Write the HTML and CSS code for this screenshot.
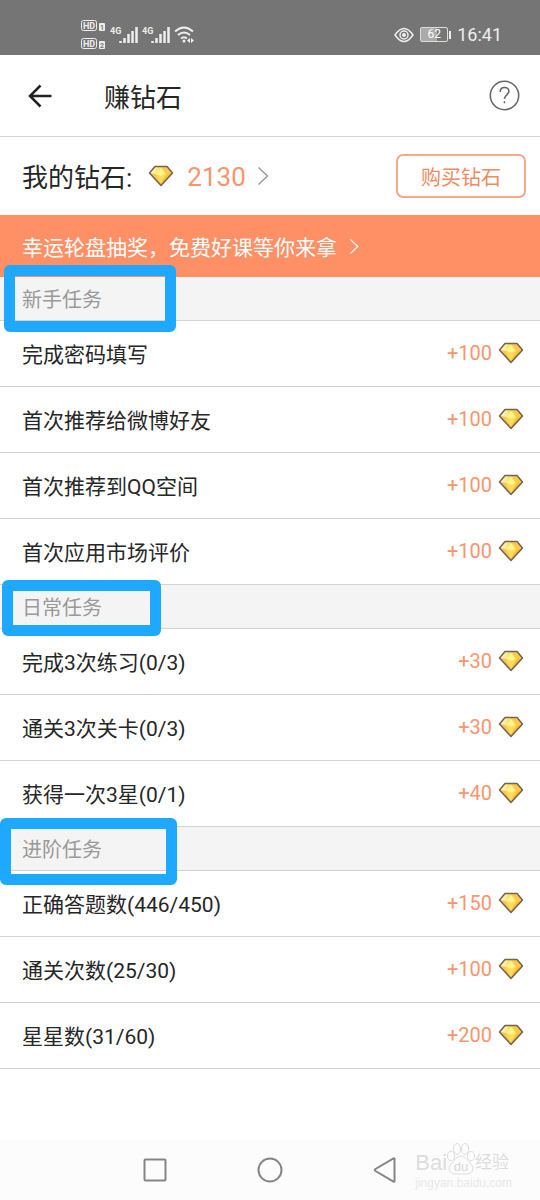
FILE: index.html
```html
<!DOCTYPE html>
<html lang="zh-CN">
<head>
<meta charset="utf-8">
<meta name="viewport" content="width=device-width, initial-scale=1">
<title>赚钻石</title>
<link rel="stylesheet" href="styles.css">
</head>
<body>
<svg class="defs" width="0" height="0" aria-hidden="true">
  <defs>
    <linearGradient id="gold" x1="0" y1="0" x2="1" y2="1">
      <stop offset="0" stop-color="#ffe978"/>
      <stop offset=".5" stop-color="#ffd33f"/>
      <stop offset="1" stop-color="#e8912a"/>
    </linearGradient>
    <linearGradient id="shine" x1="0" y1="0" x2="1" y2="0">
      <stop offset="0" stop-color="#fff8d8"/>
      <stop offset="1" stop-color="#ffdf6a"/>
    </linearGradient>
    <symbol id="gem" viewBox="0 0 26 22">
      <path d="M7 1.500h12L24.500 8 13 20.500 1.500 8z" fill="url(#gold)"/>
      <path d="M7 2 2.500 8 8 9l4-7z" fill="url(#shine)"/>
      <path d="M13 3 8 9l5 2 5-2z" fill="#fff58a"/>
      <path d="M19 2 23.500 8 18 9 14 2z" fill="#fcc94d"/>
      <path d="M2.500 8.500 8 9l5 10z" fill="#fbc457"/>
      <path d="M8 9l5 2 5-2-5 10z" fill="#ffdc5c"/>
      <path d="M7 1.500h12L24.500 8 13 20.500 1.500 8z" fill="none" stroke="#6f6450" stroke-width="1.500" stroke-linejoin="round"/>
    </symbol>
    <symbol id="chevron" viewBox="0 0 12 20">
      <path d="M1.500 1.500 10.500 10l-9 8.500" fill="none" stroke="currentColor" stroke-width="1.500"/>
    </symbol>
    <symbol id="signal" viewBox="0 0 28 18">
      <text x="0" y="8" font-family="Roboto, sans-serif" font-size="9" font-weight="700" fill="currentColor">4G</text>
      <path d="M10.500 17v-2M14.500 17v-5M18.500 17V8M22.500 17V5M26.500 17V1" stroke="currentColor" stroke-width="2.500" fill="none"/>
    </symbol>
  </defs>
</svg>

<div class="screen">
  <div class="status">
    <div class="status-group">
      <svg class="hd" viewBox="0 0 26 32" role="img" aria-label="HD 1, HD 2">
        <g fill="none" stroke="#eee" stroke-width="1">
          <rect x="1.500" y="1.500" width="15" height="10" rx="2"/>
          <rect x="1.500" y="19.500" width="15" height="10" rx="2"/>
        </g>
        <g fill="#eee">
          <rect x="19" y="4" width="6" height="8" rx="1"/>
          <rect x="19" y="22" width="6" height="8" rx="1"/>
        </g>
        <g font-family="Roboto, sans-serif" font-size="9" font-weight="700" fill="#eee">
          <text x="3" y="10">HD</text><text x="3" y="28">HD</text>
        </g>
        <g font-family="Roboto, sans-serif" font-size="7" font-weight="700" fill="#777">
          <text x="20" y="11">1</text><text x="20" y="29">2</text>
        </g>
      </svg>
      <svg class="signal" aria-hidden="true"><use href="#signal"/></svg>
      <svg class="signal" aria-hidden="true"><use href="#signal"/></svg>
      <svg class="wifi" viewBox="0 0 22 18" aria-hidden="true">
        <g fill="none" stroke="#eee" stroke-width="2">
          <path d="M1 5.500q9-8 18 0M4 9q6-5 12 0M7 12.500q3-2.500 6 0"/>
        </g>
        <circle cx="10" cy="15" r="1.500" fill="#eee"/>
        <path d="M16 12v5l-3-2.500zM17 12v5l3-2.500z" fill="#eee"/>
      </svg>
    </div>
    <div class="status-group status-right">
      <svg class="eye" viewBox="0 0 20 16" aria-hidden="true">
        <path d="M1 8q9-13 18 0-9 13-18 0z" fill="none" stroke="#eee" stroke-width="1.500"/>
        <circle cx="10" cy="8" r="4" fill="none" stroke="#eee" stroke-width="1.500"/>
        <circle cx="10" cy="8" r="2" fill="#eee"/>
      </svg>
      <div class="battery"><span>62</span></div>
      <time class="clock">16:41</time>
    </div>
  </div>

  <header class="header">
    <button class="icon-button" aria-label="返回">
      <svg class="back" viewBox="0 0 24 24"><path d="M12.500 1.500 2 12l10.500 10.500M2 12h21.500" fill="none" stroke="#222" stroke-width="2.500"/></svg>
    </button>
    <h1 class="title">赚钻石</h1>
    <button class="icon-button" aria-label="帮助">
      <svg class="help" viewBox="0 0 30 30" fill="none" stroke="#666" stroke-width="1.500">
        <circle cx="15" cy="15" r="13.750"/>
        <path d="M10.800 11.500c0-5.500 8.500-5.500 8.500-.5 0 3.200-4.300 3.500-4.300 7v.5"/>
        <path d="M15 20.500v2"/>
      </svg>
    </button>
  </header>

  <section class="balance">
    <span class="balance-label">我的钻石:</span>
    <a class="balance-link" href="#balance">
      <svg class="gem" aria-hidden="true"><use href="#gem"/></svg>
      <span>2130</span>
      <svg class="chevron" aria-hidden="true"><use href="#chevron"/></svg>
    </a>
    <button class="buy">购买钻石</button>
  </section>

  <a class="banner" href="#lottery">
    <span>幸运轮盘抽奖，免费好课等你来拿</span>
    <svg class="chevron-small" aria-hidden="true"><use href="#chevron"/></svg>
  </a>

  <main class="tasks">
    <section>
      <h2 class="group">新手任务<span class="mark mark-starter"></span></h2>
      <ul class="list">
        <li class="task"><span>完成密码填写</span><span class="reward">+100<svg class="gem"><use href="#gem"/></svg></span></li>
        <li class="task"><span>首次推荐给微博好友</span><span class="reward">+100<svg class="gem"><use href="#gem"/></svg></span></li>
        <li class="task"><span>首次推荐到QQ空间</span><span class="reward">+100<svg class="gem"><use href="#gem"/></svg></span></li>
        <li class="task"><span>首次应用市场评价</span><span class="reward">+100<svg class="gem"><use href="#gem"/></svg></span></li>
      </ul>
    </section>
    <section>
      <h2 class="group">日常任务<span class="mark mark-daily"></span></h2>
      <ul class="list">
        <li class="task"><span>完成3次练习(0/3)</span><span class="reward">+30<svg class="gem"><use href="#gem"/></svg></span></li>
        <li class="task"><span>通关3次关卡(0/3)</span><span class="reward">+30<svg class="gem"><use href="#gem"/></svg></span></li>
        <li class="task"><span>获得一次3星(0/1)</span><span class="reward">+40<svg class="gem"><use href="#gem"/></svg></span></li>
      </ul>
    </section>
    <section>
      <h2 class="group">进阶任务<span class="mark mark-advanced"></span></h2>
      <ul class="list">
        <li class="task"><span>正确答题数(446/450)</span><span class="reward">+150<svg class="gem"><use href="#gem"/></svg></span></li>
        <li class="task"><span>通关次数(25/30)</span><span class="reward">+100<svg class="gem"><use href="#gem"/></svg></span></li>
        <li class="task"><span>星星数(31/60)</span><span class="reward">+200<svg class="gem"><use href="#gem"/></svg></span></li>
      </ul>
    </section>
  </main>

  <nav class="navbar">
    <button class="icon-button" aria-label="最近任务"><svg class="nav-icon" viewBox="0 0 26 26"><rect x="2.500" y="2.500" width="21" height="21" rx="1"/></svg></button>
    <button class="icon-button" aria-label="主屏幕"><svg class="nav-icon" viewBox="0 0 26 26"><circle cx="13" cy="13" r="11.500"/></svg></button>
    <button class="icon-button" aria-label="返回上一级"><svg class="nav-icon" viewBox="0 0 26 26"><path d="M22.500 2v22q0 1-1 .5l-18-10.500q-1.500-1 0-2l18-10.500q1-.5 1 .5z"/></svg></button>
    <div class="watermark">
      <div class="brand">
        <span>Bai</span>
        <svg class="paw" viewBox="0 0 28 34" aria-hidden="true">
          <g fill="#fcfcfc" stroke="#dcdcdc">
            <ellipse cx="4" cy="14" rx="3.500" ry="4.500"/><ellipse cx="10" cy="7" rx="3.500" ry="5.500"/>
            <ellipse cx="18" cy="7" rx="3.500" ry="5.500"/><ellipse cx="24" cy="14" rx="3.500" ry="4.500"/>
            <path d="M14 14c4 0 6 4 9 7 5 4 3 11-3 11H8c-6 0-8-7-3-11 3-3 5-7 9-7z"/>
          </g>
          <text x="14" y="29" text-anchor="middle" font-family="Liberation Sans, sans-serif" font-size="13" fill="#d8d8d8">du</text>
        </svg>
        <span class="brand-cn">经验</span>
      </div>
      <div class="site">jingyan.baidu.com</div>
    </div>
  </nav>
</div>
</body>
</html>
```
FILE: styles.css
```css
* {
  box-sizing: border-box;
}

body {
  margin: 0;
  background: #fff;
  color: #262626;
  font-family: Roboto, "Noto Sans CJK SC", sans-serif;
}

h1, h2, ul {
  margin: 0;
  padding: 0;
  font-weight: 400;
}

a {
  color: inherit;
  text-decoration: none;
}

button {
  font: inherit;
}

svg {
  display: block;
  flex: none;
}

.defs {
  position: absolute;
}

.screen {
  display: flex;
  flex-direction: column;
  min-height: 100vh;
}

.status {
  display: flex;
  justify-content: space-between;
  align-items: center;
  height: 55px;
  padding: 14px 38px 0 80px;
  background: #757575;
  color: #eee;
}

.status-group {
  display: flex;
  align-items: center;
  gap: 4px;
}

.hd {
  width: 26px;
  height: 32px;
}

.signal {
  width: 28px;
  height: 18px;
}

.wifi {
  width: 22px;
  height: 18px;
}

.status-right {
  gap: 6px;
}

.eye {
  width: 20px;
  height: 16px;
}

.battery {
  display: flex;
  align-items: center;
}

.battery span {
  width: 28px;
  border: 1px solid #ddd;
  border-radius: 2px;
  background: linear-gradient(90deg, #aaa 62%, #777 62%);
  color: #fff;
  font-size: 12px;
  line-height: 13px;
  text-align: center;
}

.battery::after {
  content: "";
  width: 2px;
  height: 8px;
  margin-left: 1px;
  background: #eee;
}

.clock {
  font-size: 18px;
  line-height: 24px;
}

.header {
  display: flex;
  align-items: center;
  height: 82px;
  padding: 0 20px 0 28px;
  border-bottom: 1px solid #d2d2d2;
}

.icon-button {
  padding: 0;
  border: 0;
  background: none;
}

.back {
  width: 24px;
  height: 24px;
}

.title {
  flex: 1;
  margin-left: 52px;
  padding-top: 4px;
  font-size: 26px;
  line-height: 40px;
}

.help {
  width: 31px;
  height: 31px;
}

.balance {
  display: flex;
  align-items: center;
  height: 78px;
  padding: 0 14px 0 22px;
}

.balance-label {
  padding-top: 4px;
  font-size: 26px;
  line-height: 40px;
}

.balance-link {
  display: flex;
  flex: 1;
  align-items: center;
  margin-left: 16px;
  color: #f8956d;
  font-size: 26px;
}

.balance-link span {
  margin: 0 11px 0 13px;
  padding-top: 2px;
}

.gem {
  width: 26px;
  height: 22px;
}

.chevron {
  width: 12px;
  height: 20px;
  color: #999;
}

.buy {
  width: 130px;
  height: 44px;
  padding: 0;
  border: 2px solid #f6a88a;
  border-radius: 7px;
  background: #fff;
  color: #f08a62;
  font-size: 20px;
}

.banner {
  display: flex;
  align-items: center;
  gap: 12px;
  height: 62px;
  padding: 0 22px;
  background: #ff9066;
  color: #fff;
  font-size: 21px;
}

.chevron-small {
  width: 10px;
  height: 17px;
}

.group {
  position: relative;
  height: 44px;
  padding-left: 22px;
  border-bottom: 1px solid #d2d2d2;
  background: #f4f4f4;
  color: #999;
  font-size: 20px;
  line-height: 47px;
}

/* Highlight frames drawn over the group headings */
.mark {
  position: absolute;
  border: 11px solid #1ea8ff;
  border-radius: 6px;
}

.mark-starter {
  top: -12px;
  left: 4px;
  width: 172px;
  height: 67px;
}

.mark-daily {
  top: -5px;
  left: 2px;
  width: 159px;
  height: 56px;
}

.mark-advanced {
  top: -9px;
  left: 0;
  width: 177px;
  height: 67px;
}

.list {
  list-style: none;
}

.task {
  display: flex;
  justify-content: space-between;
  align-items: center;
  height: 66px;
  padding: 0 16px 2px 22px;
  border-bottom: 1px solid #d2d2d2;
  font-size: 21px;
}

.reward {
  display: flex;
  align-items: center;
  gap: 6px;
  color: #f8956d;
  font-size: 20px;
  line-height: 22px;
}

.navbar {
  position: relative;
  display: flex;
  justify-content: space-between;
  align-items: center;
  height: 60px;
  margin-top: auto;
  padding: 0 142px;
  background: #fcfcfc;
}

.nav-icon {
  width: 26px;
  height: 26px;
  fill: none;
  stroke: #858585;
  stroke-width: 2px;
}

.watermark {
  position: absolute;
  right: 28px;
  bottom: 10px;
  color: #dcdcdc;
  font-family: "Liberation Sans", "Noto Sans CJK SC", sans-serif;
}

.brand {
  display: flex;
  align-items: flex-end;
  font-size: 22px;
  line-height: 26px;
}

.paw {
  width: 28px;
  height: 34px;
}

.brand-cn {
  font-size: 17px;
}

.site {
  color: #e8e8e8;
  font-size: 12px;
  line-height: 14px;
}
```
